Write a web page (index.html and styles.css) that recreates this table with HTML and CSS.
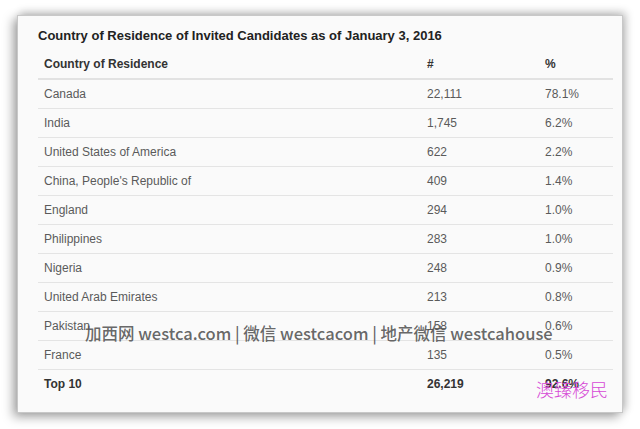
FILE: index.html
```html
<!DOCTYPE html>
<html>
<head>
<meta charset="utf-8">
<link rel="stylesheet" href="styles.css">
</head>
<body>
<div class="frame">
  <div class="card">
    <h1 class="title">Country of Residence of Invited Candidates as of January 3, 2016</h1>
    <table class="data">
      <thead>
        <tr><th class="c1">Country of Residence</th><th class="c2">#</th><th class="c3">%</th></tr>
      </thead>
      <tbody>
        <tr><td>Canada</td><td>22,111</td><td>78.1%</td></tr>
        <tr><td>India</td><td>1,745</td><td>6.2%</td></tr>
        <tr><td>United States of America</td><td>622</td><td>2.2%</td></tr>
        <tr><td>China, People's Republic of</td><td>409</td><td>1.4%</td></tr>
        <tr><td>England</td><td>294</td><td>1.0%</td></tr>
        <tr><td>Philippines</td><td>283</td><td>1.0%</td></tr>
        <tr><td>Nigeria</td><td>248</td><td>0.9%</td></tr>
        <tr><td>United Arab Emirates</td><td>213</td><td>0.8%</td></tr>
        <tr><td>Pakistan</td><td>158</td><td>0.6%</td></tr>
        <tr><td>France</td><td>135</td><td>0.5%</td></tr>
        <tr class="total"><td>Top 10</td><td>26,219</td><td>92.6%</td></tr>
      </tbody>
    </table>
    <div class="watermark">加西网 westca.com | 微信 westcacom | 地产微信 westcahouse</div>
    <div class="stamp">澳臻移民</div>
  </div>
</div>
</body>
</html>
```

FILE: styles.css
```css
html, body {
  margin: 0;
  padding: 0;
  background: #ffffff;
}
.frame {
  width: 640px;
  height: 429px;
  padding: 15px 0 0 17px;
  box-sizing: border-box;
  overflow: hidden;
}
.card {
  position: relative;
  width: 606px;
  height: 398px;
  box-sizing: border-box;
  background: #fafafa;
  border: 1px solid #c8c8c8;
  box-shadow: -4px 4px 10px rgba(0,0,0,0.35), 3px -3px 8px rgba(0,0,0,0.22);
  padding: 0 0 0 20px;
}
.title {
  margin: 0;
  height: 34px;
  padding-top: 12px;
  box-sizing: border-box;
  font-family: "Liberation Sans", Arial, sans-serif;
  font-size: 13px;
  font-weight: bold;
  color: #222;
  line-height: 16px;
}
.data {
  width: 575px;
  border-collapse: collapse;
  font-family: "Liberation Sans", Arial, sans-serif;
  font-size: 12px;
  color: #5a5a5a;
}
.data th, .data td {
  height: 29px;
  padding: 0 6px;
  box-sizing: border-box;
  text-align: left;
  vertical-align: middle;
  font-weight: normal;
}
.data th {
  font-weight: bold;
  color: #333;
  border-bottom: 2px solid #e2e2e2;
}
.data td {
  border-bottom: 1px solid #e4e4e4;
}
.data .c1 { width: 383px; }
.data .c2 { width: 118px; }
.data tr.total td {
  font-weight: bold;
  color: #333;
  border-bottom: none;
}
.watermark {
  position: absolute;
  left: 67px;
  top: 305px;
  font-family: "Noto Sans CJK SC", sans-serif;
  font-weight: 500;
  font-size: 16.5px;
  line-height: 24px;
  color: rgba(85,85,85,0.9);
  white-space: nowrap;
}
.stamp {
  position: absolute;
  left: 518px;
  top: 361px;
  font-family: "Noto Sans CJK SC", sans-serif;
  font-weight: 300;
  font-size: 18px;
  line-height: 24px;
  color: #d648d6;
  white-space: nowrap;
}
```
